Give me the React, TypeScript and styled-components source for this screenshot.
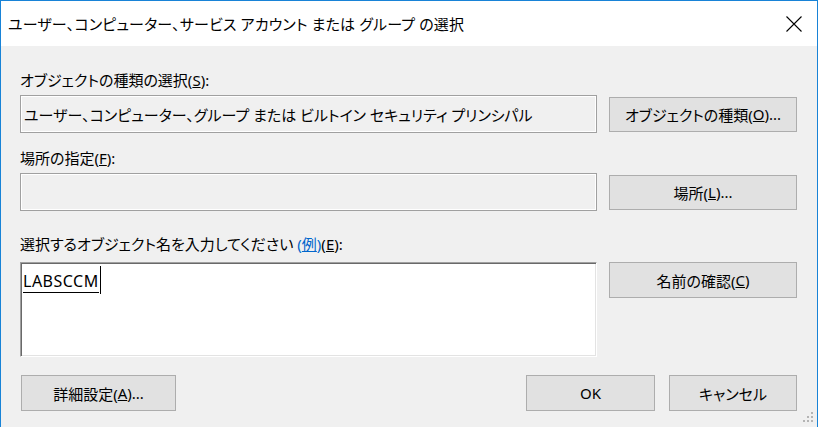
import styled, { createGlobalStyle } from 'styled-components';

const GlobalStyle = createGlobalStyle`
  html, body {
    margin: 0;
    padding: 0;
    overflow: hidden;
  }
  body {
    font-family: "Noto Sans", "Noto Sans CJK JP", sans-serif;
  }
`;

function App() {
	return (
		<>
			<GlobalStyle />
			<Window>
				<TitleBar>
					<Title>ユーザー、コンピューター、サービス アカウント または グループ の選択</Title>
					<CloseButton aria-label='閉じる'>
						<svg width='16' height='16' viewBox='0 0 16 16'>
							<path d='M0.5 0.5 L15.5 15.5 M15.5 0.5 L0.5 15.5' stroke='#000' strokeWidth='1.1' fill='none' />
						</svg>
					</CloseButton>
				</TitleBar>

				<Content>
					<Label>
						オブジェクトの種類の選択(<u>S</u>):
					</Label>
					<Row $gapTop={5} $align='center'>
						<ReadBox>ユーザー、コンピューター、グループ または ビルトイン セキュリティ プリンシパル</ReadBox>
						<Button $height={35}>
							オブジェクトの種類(<u>O</u>)...
						</Button>
					</Row>

					<Label $gapTop={15}>
						場所の指定(<u>F</u>):
					</Label>
					<Row $gapTop={5} $align='center'>
						<ReadBox />
						<Button $height={35}>
							場所(<u>L</u>)...
						</Button>
					</Row>

					<Label $gapTop={23}>
						選択するオブジェクト名を入力してください <Link>(<u>例</u>)</Link>(<u>E</u>):
					</Label>
					<Row $gapTop={8} $align='start'>
						<NameArea>
							<NameToken>LABSCCM</NameToken>
							<Caret />
						</NameArea>
						<Button $height={36}>
							名前の確認(<u>C</u>)
						</Button>
					</Row>

					<Footer>
						<Button $height={36} $width={155}>
							詳細設定(<u>A</u>)...
						</Button>
						<FooterRight>
							<Button $height={36} $width={129}>
								OK
							</Button>
							<Button $height={36} $width={128}>
								キャンセル
							</Button>
						</FooterRight>
					</Footer>
				</Content>

				<Grip width='12' height='12' viewBox='0 0 12 12'>
					<rect x='9' y='0' width='2' height='2' />
					<rect x='5' y='4' width='2' height='2' />
					<rect x='9' y='4' width='2' height='2' />
					<rect x='1' y='8' width='2' height='2' />
					<rect x='5' y='8' width='2' height='2' />
					<rect x='9' y='8' width='2' height='2' />
				</Grip>
			</Window>
		</>
	);
}

export default App;

const Window = styled.div`
  position: relative;
  width: 818px;
  height: 427px;
  box-sizing: border-box;
  border: 1px solid #1883d7;
  border-bottom: none;
  background-color: #f0f0f0;
  display: flex;
  flex-direction: column;
  color: #000;
  font-size: 15px;
  font-feature-settings: "palt";
`;

const TitleBar = styled.header`
  height: 45px;
  flex: none;
  background-color: #fff;
  display: flex;
  align-items: center;
  justify-content: space-between;
  padding-left: 7px;
`;

const Title = styled.div`
  font-size: 15px;
  line-height: 20px;
  letter-spacing: 0.15px;
  white-space: nowrap;
`;

const CloseButton = styled.div`
  width: 46px;
  height: 100%;
  display: flex;
  align-items: center;
  justify-content: center;
`;

const Content = styled.main`
  flex: 1;
  display: flex;
  flex-direction: column;
  padding: 24px 20px 0 19px;
`;

const Label = styled.div<{ $gapTop?: number }>`
  height: 20px;
  line-height: 20px;
  white-space: nowrap;
  margin-top: ${props => props.$gapTop ?? 0}px;
`;

const Link = styled.span`
  color: #0066cc;
`;

const Row = styled.div<{ $gapTop: number; $align: string }>`
  display: grid;
  grid-template-columns: 577px 188px;
  column-gap: 12px;
  align-items: ${props => props.$align};
  margin-top: ${props => props.$gapTop}px;
`;

const ReadBox = styled.div`
  height: 38px;
  box-sizing: border-box;
  border: 1px solid #a0a0a0;
  box-shadow: inset 0 0 0 1px #fff;
  background-color: #f0f0f0;
  padding: 0 3px;
  display: flex;
  align-items: center;
  white-space: nowrap;
  overflow: hidden;
`;

const Button = styled.div<{ $height: number; $width?: number }>`
  height: ${props => props.$height}px;
  width: ${props => (props.$width ? `${props.$width}px` : 'auto')};
  box-sizing: border-box;
  border: 1px solid #adadad;
  background-color: #e1e1e1;
  display: flex;
  align-items: center;
  justify-content: center;
  white-space: nowrap;
`;

const NameArea = styled.div`
  height: 95px;
  box-sizing: border-box;
  border: 1px solid;
  border-color: #a0a0a0 #fff #fff #a0a0a0;
  box-shadow: inset 1px 1px 0 #696969, inset -1px -1px 0 #e3e3e3;
  background-color: #fff;
  padding: 3px 0 0 2px;
  display: flex;
  align-items: flex-start;
`;

const NameToken = styled.span`
  font-size: 16px;
  letter-spacing: 0.5px;
  line-height: 22px;
  padding-top: 4px;
  border-bottom: 1px solid #000;
`;

const Caret = styled.span`
  width: 1px;
  height: 28px;
  background-color: #000;
  margin-left: 1px;
`;

const Footer = styled.footer`
  display: flex;
  justify-content: space-between;
  margin-top: 18px;
  padding-left: 1px;
`;

const FooterRight = styled.div`
  display: flex;
  gap: 14px;
`;

const Grip = styled.svg`
  position: absolute;
  right: 3px;
  bottom: 3px;
  fill: #b4b4b4;
`;
